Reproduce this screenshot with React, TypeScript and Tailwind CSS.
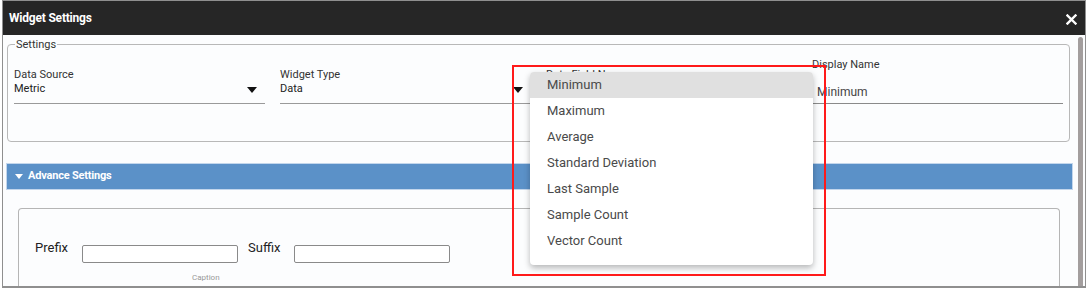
import React from "react";

const options = [
  "Minimum",
  "Maximum",
  "Average",
  "Standard Deviation",
  "Last Sample",
  "Sample Count",
  "Vector Count",
];

const Caret = () => (
  <svg width="10" height="6" viewBox="0 0 10 6" className="block">
    <path d="M0 0 L10 0 L5 6 Z" fill="#111" />
  </svg>
);

type FieldProps = {
  label: string;
  value: string;
  caret?: boolean;
};

const SelectField = ({ label, value, caret }: FieldProps) => (
  <div className="flex flex-col h-[64px] pt-[26px]">
    <div className="text-[11px] leading-[13px] text-[#333]">{label}</div>
    <div className="flex items-center justify-between h-[17px] pr-[8px]">
      <span className="text-[11px] text-[#222]">{value}</span>
      {caret && <Caret />}
    </div>
    <div className="mt-[5px] border-b border-[#9a9a9a]" />
  </div>
);

export default function App() {
  return (
    <div
      className="relative w-[1086px] h-[288px] overflow-hidden bg-white"
      style={{ fontFamily: "Roboto, 'Liberation Sans', sans-serif" }}
    >
      <div className="ml-[2px] w-[1084px] h-[288px] border-t border-l border-r border-b-2 border-[#8f8f8f] flex flex-col">
        {/* Header */}
        <div className="h-[34px] shrink-0 bg-[#262626] flex items-center justify-between pl-[6px] pr-[8px]">
          <span className="text-white font-bold text-[12px] tracking-[-0.2px]">
            Widget Settings
          </span>
          <svg width="11" height="11" viewBox="0 0 11 11" className="mt-[2px]">
            <path d="M1.5 1.5 L9.5 9.5 M9.5 1.5 L1.5 9.5" stroke="#fff" strokeWidth="2.4" strokeLinecap="square" />
          </svg>
        </div>

        {/* Body */}
        <div className="flex flex-1 bg-[#fcfdfe] overflow-hidden">
          <div className="w-[1073px] flex flex-col">
            <fieldset className="ml-[4px] mt-[3px] w-[1063px] h-[104px] border border-[#b8b8b8] rounded-[4px] px-[6px] min-w-0">
              <legend className="ml-[1px] px-[1px] text-[11px] leading-[13px] text-[#333]">
                Settings
              </legend>
              <div className="grid grid-cols-[251px_251px_251px_251px] gap-x-[15px] -mt-[9px]">
                <SelectField label="Data Source" value="Metric" caret />
                <SelectField label="Widget Type" value="Data" caret />
                <SelectField label="Data Field Name" value="Minimum" />
                <div className="flex flex-col h-[64px] pt-[16px]">
                  <div className="text-[11px] leading-[13px] text-[#333]">Display Name</div>
                  <div className="h-[30px] flex items-center pl-[5px] pt-[11px] text-[12px] text-[#444]">
                    Minimum
                  </div>
                  <div className="mt-[2px] -ml-[5px] border-b border-[#8a8a8a]" />
                </div>
              </div>
            </fieldset>

            {/* Advance Settings bar */}
            <div className="ml-[3px] mt-[21px] w-[1067px] h-[27px] bg-[#5b91c8] border border-[#c3d6ec] flex items-center pl-[8px] gap-[5px]">
              <svg width="8" height="5" viewBox="0 0 8 5">
                <path d="M0 0 L8 0 L4 5 Z" fill="#fff" />
              </svg>
              <span className="text-white font-bold text-[11px] tracking-[-0.2px]">
                Advance Settings
              </span>
            </div>

            {/* Advance panel */}
            <div className="ml-[15px] mt-[18px] w-[1042px] flex-1 border-t border-l border-r border-[#b5b5b5] rounded-t-[4px] pl-[16px] pt-[31px]">
              <div className="flex items-start">
                <span className="w-[47px] text-[13px] leading-[15px] text-[#222]">Prefix</span>
                <div className="mt-[5px] w-[156px] h-[18px] border border-[#8a8a8a] rounded-[2px] bg-white" />
                <span className="ml-[10px] w-[46px] text-[13px] leading-[15px] text-[#222]">Suffix</span>
                <div className="mt-[5px] w-[156px] h-[18px] border border-[#8a8a8a] rounded-[2px] bg-white" />
              </div>
              <div className="ml-[157px] mt-[10px] text-[8px] leading-[9px] text-[#999]">Caption</div>
            </div>
          </div>

          {/* Scrollbar */}
          <div className="flex-1 flex justify-center pt-[2px]">
            <div className="w-[5px] h-full bg-[#a39e9e] rounded-t-[3px]" />
          </div>
        </div>
      </div>

      {/* Dropdown menu */}
      <div className="absolute left-[530px] top-[72px] w-[283px] h-[193px] bg-white rounded-[4px] shadow-[0_3px_6px_rgba(0,0,0,0.28)] overflow-hidden">
        {options.map((o, i) => (
          <div
            key={o}
            className={`h-[26px] flex items-center pl-[17px] text-[13px] text-[#4a4a4a] ${
              i === 0 ? "bg-[#e0e0e0]" : ""
            }`}
          >
            {o}
          </div>
        ))}
      </div>

      {/* Highlight box */}
      <div className="absolute left-[512px] top-[65px] w-[314px] h-[211px] border-2 border-[#ff1a1a] pointer-events-none" />
    </div>
  );
}
